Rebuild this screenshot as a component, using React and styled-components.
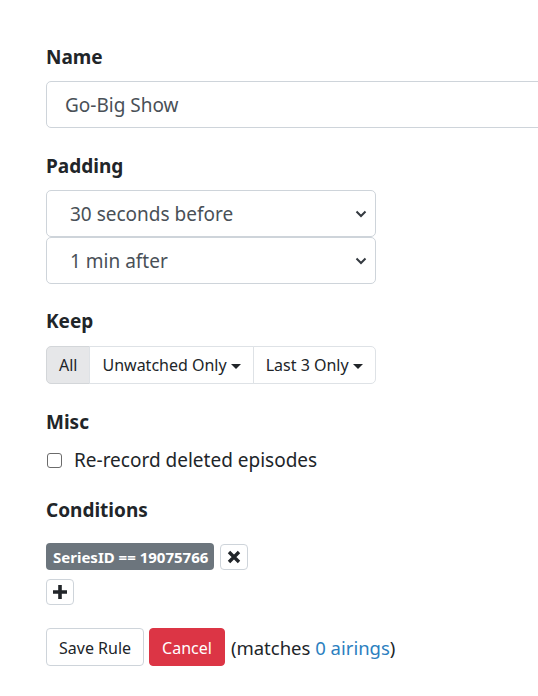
import React from "react";
import styled, { createGlobalStyle } from "styled-components";

const Global = createGlobalStyle`
  html, body { margin: 0; padding: 0; overflow: hidden; background: #fff; }
  body { font-family: "Noto Sans", "Open Sans", sans-serif; color: #212529; font-size: 18px; }
  * { box-sizing: border-box; }
`;

const Page = styled.div`
  padding: 44px 0 0 46px;
  width: 538px;
  overflow: hidden;
`;

const Group = styled.div`
  margin-bottom: ${(p) => p.$mb || 25}px;
`;

const Label = styled.div`
  font-weight: 700;
  font-size: 19px;
  line-height: 27px;
  margin-bottom: ${(p) => p.$mb ?? 10}px;
`;

const TextInput = styled.div`
  width: 540px;
  height: 47px;
  border: 1px solid #ced4da;
  border-radius: 5px;
  padding: 0 18px;
  display: flex;
  align-items: center;
  font-size: 19px;
  color: #495057;
`;

const Select = styled.div`
  width: 330px;
  height: 47px;
  border: 1px solid #ced4da;
  border-radius: 5px;
  padding: 0 8px 0 23px;
  display: flex;
  align-items: center;
  justify-content: space-between;
  font-size: 19px;
  color: #495057;
`;

const BtnGroup = styled.div`
  display: inline-flex;
  height: 38px;
  border-radius: 5px;
`;

const GroupBtn = styled.div`
  display: flex;
  align-items: center;
  gap: 4px;
  padding: 0 12px;
  font-size: 16px;
  color: #212529;
  border: 1px solid ${(p) => (p.$active ? "#d3d6d9" : "#dee2e6")};
  background: ${(p) => (p.$active ? "#e6e7e9" : "#fff")};
  margin-left: -1px;
  &:first-child { margin-left: 0; border-radius: 5px 0 0 5px; }
  &:last-child { border-radius: 0 5px 5px 0; }
`;

const Caret = styled.span`
  width: 0;
  height: 0;
  border-left: 5px solid transparent;
  border-right: 5px solid transparent;
  border-top: 5px solid #212529;
  margin-top: 2px;
`;

const CheckRow = styled.label`
  display: flex;
  align-items: center;
  gap: 12px;
  font-size: 19px;
  line-height: 27px;
  padding-left: 1px;
`;

const Box = styled.span`
  width: 15px;
  height: 15px;
  border: 1px solid #6b6b6b;
  border-radius: 3px;
  background: #fff;
`;

const CondRow = styled.div`
  display: flex;
  align-items: center;
  gap: 6px;
  margin-top: 19px;
`;

const Badge = styled.span`
  background: #6c757d;
  color: #fff;
  font-weight: 700;
  font-size: 15px;
  height: 27px;
  padding: 0 6px 0 7px;
  border-radius: 4px;
  display: flex;
  align-items: center;
`;

const IconBtn = styled.div`
  width: 28px;
  height: 26px;
  border: 1px solid #ced4da;
  border-radius: 4px;
  display: flex;
  align-items: center;
  justify-content: center;
  background: #fff;
  margin-top: ${(p) => p.$mt || 0}px;
`;

const Actions = styled.div`
  display: flex;
  align-items: center;
  gap: 5px;
  margin-top: 23px;
`;

const Button = styled.div`
  height: 38px;
  padding: 1px 12px 0;
  display: flex;
  align-items: center;
  border-radius: 4px;
  font-size: 16px;
  border: 1px solid ${(p) => (p.$danger ? "#dc3545" : "#ced4da")};
  background: ${(p) => (p.$danger ? "#dc3545" : "#fff")};
  color: ${(p) => (p.$danger ? "#fff" : "#212529")};
`;

const Note = styled.span`
  font-size: 18.5px;
  margin-left: 1px;
`;

const Link = styled.a`
  color: #2c7fc0;
  text-decoration: none;
`;

const Chevron = () => (
  <svg width="12" height="8" viewBox="0 0 12 8">
    <path d="M1.5 1.5 L6 6 L10.5 1.5" fill="none" stroke="#343a40" strokeWidth="2" />
  </svg>
);

const XIcon = () => (
  <svg width="14" height="14" viewBox="0 0 14 14">
    <path d="M2 2 L12 12 M12 2 L2 12" stroke="#212529" strokeWidth="3.4" />
  </svg>
);

const PlusIcon = () => (
  <svg width="16" height="16" viewBox="0 0 16 16">
    <path d="M8 1 V15 M1 8 H15" stroke="#212529" strokeWidth="3.6" />
  </svg>
);

export default function App() {
  return (
    <Page>
      <Global />
      <Group>
        <Label>Name</Label>
        <TextInput>Go-Big Show</TextInput>
      </Group>
      <Group $mb={24}>
        <Label>Padding</Label>
        <Select>30 seconds before<Chevron /></Select>
        <Select>1 min after<Chevron /></Select>
      </Group>
      <Group>
        <Label $mb={11}>Keep</Label>
        <BtnGroup>
          <GroupBtn $active>All</GroupBtn>
          <GroupBtn>Unwatched Only<Caret /></GroupBtn>
          <GroupBtn>Last 3 Only<Caret /></GroupBtn>
        </BtnGroup>
      </Group>
      <Group $mb={23}>
        <Label $mb={11}>Misc</Label>
        <CheckRow><Box />Re-record deleted episodes</CheckRow>
      </Group>
      <div>
        <Label $mb={0}>Conditions</Label>
        <CondRow>
          <Badge>SeriesID == 19075766</Badge>
          <IconBtn><XIcon /></IconBtn>
        </CondRow>
        <IconBtn $mt={9}><PlusIcon /></IconBtn>
        <Actions>
          <Button>Save Rule</Button>
          <Button $danger>Cancel</Button>
          <Note>(matches <Link>0 airings</Link>)</Note>
        </Actions>
      </div>
    </Page>
  );
}
